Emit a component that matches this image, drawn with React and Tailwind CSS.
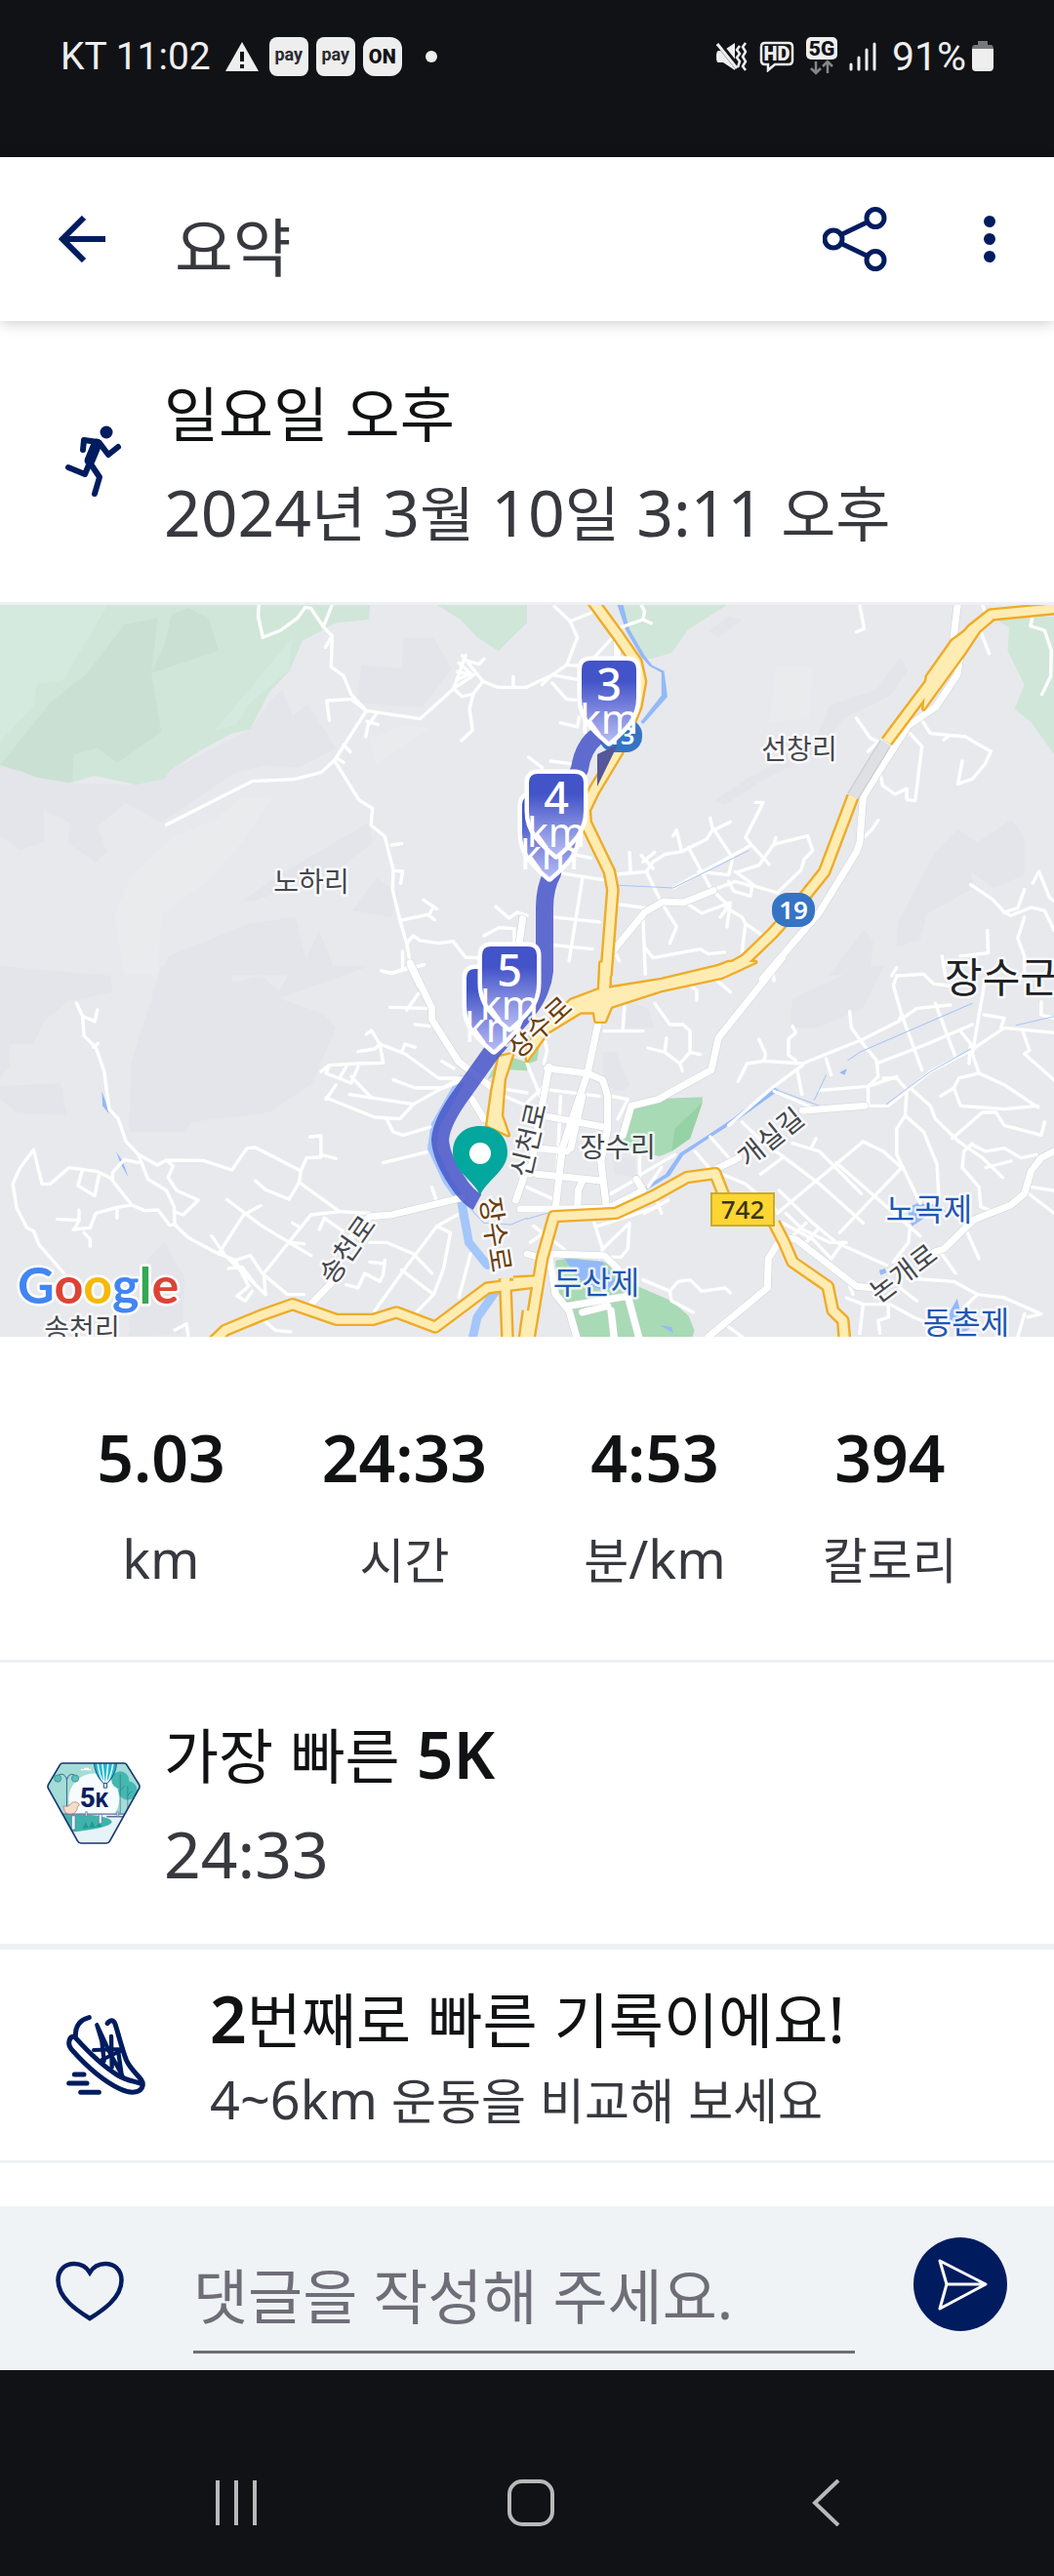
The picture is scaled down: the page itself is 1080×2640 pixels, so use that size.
import { useState } from "react";

const NAVY = "#001c5f";

const STATS = [
  { value: "5.03", label: "km" },
  { value: "24:33", label: "시간" },
  { value: "4:53", label: "분/km" },
  { value: "394", label: "칼로리" },
];

// Map geometry, one tile per quarter. Points are in tile units, x/y is the tile origin on the map.
const TILES = [
  {
    x: 0,
    y: -10,
    shade: [
      "0,522 205,578 405,583 505,540 745,412 810,430 800,520 700,545 480,700 375,640 290,710 318,790 285,822 200,760 210,700 130,660 130,760 60,782 0,740",
      "800,330 840,290 870,370 915,335 1000,470 890,530 740,520 745,412",
      "1075,215 1195,225 1200,132 1290,132 1345,225 1255,345 1060,330",
      "720,940 830,860 1095,700 1110,760 1010,840 760,940",
      "1050,970 1120,870 1185,915 1165,990",
      "480,1168 500,1110 740,1010 880,990 910,1120 950,1030 1000,1168",
    ],
    light: ["390,860 520,740 640,690 720,620 810,620 720,760 620,880 480,980 470,1168 370,1168 340,990", "1100,440 1200,400 1280,410 1120,520"],
    woods: [
      "0,0 1103,0 1098,75 1000,85 900,140 860,235 800,300 745,412 690,425 600,475 505,540 490,565 405,583 280,555 205,578 110,560 95,540 50,540 0,522",
      "1300,30 1370,75 1420,130 1483,172 1568,85 1568,30",
    ],
    woodsLight: ["0,30 320,30 240,170 190,260 110,275 100,340 0,450", "640,415 790,230 870,130 860,230 745,330 700,400"],
    woodsDark: ["370,90 470,70 450,240 480,420 350,515 290,470 220,490 215,575 110,560 60,540 0,522 50,460 150,330 260,240", "510,60 560,40 620,70 650,170 450,240 490,150"],
    minor: [
      "770,30 768,65 782,130 835,108 885,70 908,37 925,40 962,97 988,125 985,220 1022,248 1045,305 1090,355 1250,380 1350,287 1385,185",
      "988,30 962,97",
      "988,125 968,160",
      "1045,320 972,324 980,385",
      "1045,320 1090,355 995,508 955,545 875,566 750,572 495,706",
      "1120,365 1095,400 1088,435",
      "1092,388 1125,397",
      "1022,460 1042,482",
      "1000,500 1022,514",
      "995,508 1068,630 1108,655 1104,707 1145,742 1170,845 1168,905 1190,1000 1210,1070 1222,1140",
      "1165,768 1195,764",
      "1175,847 1198,849 1192,886",
      "1190,1000 1273,982 1293,998",
      "1260,937 1300,965",
      "1290,958 1275,985",
      "1210,1070 1230,1047 1250,1062 1305,1070 1348,1064 1385,1113 1420,1115",
      "1350,287 1375,312 1408,303 1437,265 1480,283 1568,283",
      "1408,303 1397,350 1406,415 1373,447",
      "1375,185 1437,265",
      "1360,235 1410,245 1350,287",
      "1385,200 1425,212 1440,196",
      "1365,208 1400,240 1360,260",
      "1527,250 1527,283",
      "1440,1047 1485,1022 1530,1025 1530,1070",
      "1475,958 1515,993 1540,975 1568,985",
      "1135,1155 1165,1163 1215,1148 1262,1136",
      "1198,1095 1198,1150",
    ],
    mid: ["1222,1140 1250,1200", "1555,995 1545,1070"],
  },
  {
    x: 540,
    y: -10,
    shade: [
      "1110,190 1135,230 1080,310 940,380 870,480 700,570 590,645 560,630 660,560 700,540 860,440 900,340 1040,290",
      "1215,790 1280,720 1340,760 1440,690 1480,740 1480,860 1390,900 1320,850 1330,900 1190,980 1170,1060 1100,1080 1105,1000",
      "540,110 600,65 640,75 570,130",
      "900,1168 1000,1030 1030,1060 1020,1168",
    ],
    light: ["740,220 850,220 840,380 720,390"],
    woods: ["280,30 595,30 480,105 430,178 370,195 345,195 300,110", "1395,75 1568,65 1568,490 1500,390 1450,350 1480,275 1430,170 1435,100"],
    water: ["268,28 286,30 305,105 350,185 372,215 408,233 418,312 346,396 338,390 400,308 400,238 365,218 340,190 295,110"],
    stream: ["270,892 435,900 660,785"],
    minor: [
      "82,35 128,80 150,130 118,215 75,245 45,275",
      "128,80 200,50",
      "170,225 250,135",
      "0,282 75,245 165,262",
      "75,270 118,320 145,322",
      "115,215 165,217",
      "275,100 345,75 350,50 340,30",
      "345,75 370,86",
      "100,393 150,405 155,375",
      "5,498 45,530",
      "70,510 130,518",
      "990,30 1003,103 980,113",
      "1350,112 1375,180",
      "1505,60 1498,95 1540,108 1560,170 1558,250 1532,305",
      "1355,30 1372,75",
      "980,378 1022,440 1045,450 1015,480",
      "1140,425 1175,465 1155,632 1130,628 1130,595 1095,612 1058,585 1050,545",
      "1175,385 1200,425 1305,435 1345,460 1380,480 1362,520 1325,565 1282,580 1295,510",
      "1240,445 1255,432",
      "1045,692 1025,722 1005,742",
      "305,790 308,850",
      "265,858 355,850 375,820 410,797 460,788 535,750 550,725 605,697",
      "545,685 553,722",
      "435,740 445,722 460,788",
      "480,775 550,908",
      "553,715 612,808 600,860 510,850",
      "680,637 703,637 650,745 668,768 720,827",
      "740,745 735,765 690,830 630,850",
      "740,765 835,740 850,785 825,812 815,845 745,915 680,895 620,850",
      "355,850 400,945 445,1020 425,1070",
      "340,800 375,840",
      "345,820 380,790",
      "435,900 668,768",
      "550,908 620,880 670,895 665,925 615,910 600,880",
      "555,910 600,955 575,990",
      "465,940 520,978 605,945 595,1020",
      "590,960 640,990 650,1010 700,1045",
      "650,1010 640,1095",
      "270,950 355,962",
      "345,985 352,1165",
      "352,1085 375,1115 515,1088 540,1103 588,1098",
      "75,990 215,1005",
      "165,870 125,1125",
      "75,1075 195,1088",
      "100,855 245,878",
      "255,1085 275,1125",
      "110,790 190,808",
      "1320,890 1385,935 1420,975 1460,962 1480,905",
      "1505,885 1523,850 1555,930 1568,940",
      "1420,975 1440,985 1500,960 1540,970 1568,1030",
      "1480,990 1460,1055 1480,1110 1480,1170",
      "1370,1030 1372,1100 1290,1110",
      "1235,1110 1245,1170",
      "1100,1145 1085,1170",
    ],
    mid: [
      "555,908 465,945 405,942 350,975 255,1095",
      "1282,20 1268,140",
      "1288,190 1280,245 1215,345 1135,400 1060,520 1000,620 990,760 980,790 870,975 700,1180",
      "268,120 268,200",
    ],
    main: [
      "190,10 275,130 325,205 338,265 325,340 270,480 200,600 172,660 175,700 245,850 255,905 235,1170",
      "1600,38 1380,60 1325,105 1280,160 1070,450",
      "970,618 885,850 800,960 730,1040 650,1120 590,1155 400,1200",
    ],
    junction: ["1265,140 1325,95 1370,60 1385,75 1345,110 1300,180 1180,350 1190,250"],
  },
  {
    x: 0,
    y: 370,
    shade: [
      "0,0 330,30 335,80 200,110 130,170 100,240 30,240 30,310 0,340",
      "0,370 180,360 200,460 50,450 0,410",
      "690,50 780,30 830,75 860,25 1000,0 1100,0 830,100 960,145 1000,190 970,260 930,360 800,450 570,480 550,510 385,510 390,300 480,0 690,0",
      "440,900 490,850 550,960 540,1130 380,1140 390,1080",
    ],
    parks: ["1450,350 1490,270 1568,296 1568,322 1500,318"],
    water: ["303,385 312,410 325,455 305,430", "345,570 365,600 382,650 360,610"],
    river: ["1372,350 1295,490 1285,560 1330,660 1372,720 1395,850 1450,920", "1475,1000 1420,1080 1405,1150"],
    stream: ["1568,775 1520,795 1440,790 1385,730"],
    minor: [
      "228,115 246,155 250,215 285,250 310,325 325,440 352,470 375,540 412,580 468,612 495,597 605,598 690,627 735,560 760,558 895,630 890,665 860,717",
      "246,155 282,170 290,135",
      "278,250 292,238",
      "412,580 440,655 495,690 518,740 520,795 560,835 640,880",
      "495,597 515,615 500,650 525,690 590,720 545,765 518,755",
      "412,605 370,595 335,635 335,660 392,735 430,752 470,750 505,797 520,795",
      "335,655 290,632 205,620 150,670 125,670 100,565 60,620 38,670 50,745 80,805 100,815 115,855 190,945",
      "245,628 232,675 282,707 295,640",
      "392,735 348,742 285,760 268,805 218,810",
      "348,742 348,775",
      "170,778 235,782 235,750",
      "235,782 222,810",
      "250,820 268,840 268,862",
      "895,630 912,590 955,588 955,522 922,525",
      "955,580 1000,592",
      "860,717 790,688 760,660",
      "890,665 1010,755 1100,760",
      "725,765 650,885",
      "675,718 780,800 925,890",
      "725,765 775,737",
      "630,830 670,890 740,960 790,1010",
      "640,880 700,905 745,890 780,945 855,1010 905,1010",
      "700,905 740,985 705,1015 730,1030 750,1000",
      "680,930 720,925 760,980",
      "925,765 785,945 790,1010",
      "925,765 1010,755",
      "870,850 905,855",
      "870,790 895,805",
      "950,810 965,775 1020,815",
      "1140,605 1270,572",
      "1285,680 1298,720",
      "1100,850 1150,850 1230,885 1285,945",
      "1360,765 1300,800 1205,930 1115,1060",
      "1195,935 1290,1010 1225,1080",
      "1300,800 1340,820 1320,930 1290,1010",
      "1400,885 1365,1020",
      "1145,905 1140,950 1130,970 1085,945 1065,990 1030,980",
      "1100,910 1145,915",
      "1160,127 1270,130",
      "1235,180 1280,185",
      "1245,85 1210,135",
      "1135,15 1165,22 1215,5",
      "1065,263 1115,255 1130,240",
      "1090,210 1105,198 1130,240 1140,298 1065,300 980,305 955,325",
      "1130,240 1205,270 1305,345 1380,345",
      "1195,265 1205,240 1235,250",
      "980,305 970,330 1045,360 1065,310",
      "1030,310 1010,345",
      "1045,340 1105,405",
      "970,410 1000,365",
      "1170,350 1235,375 1320,375 1380,350",
      "1040,395 1230,425 1360,350",
      "970,405 1115,465 1190,470 1230,425",
      "1150,470 1170,510 1200,520 1280,495",
      "1315,293 1350,315",
      "520,1120 555,1100 560,1135",
      "780,1085 820,1120 865,1125",
      "1500,400 1568,430",
      "1510,380 1568,390",
    ],
    mid: [
      "1220,-10 1285,130 1285,165 1365,295 1465,375",
      "1405,410 1440,470",
      "1375,712 1165,765 1100,770 1040,840",
      "990,970 925,1040",
      "1535,720 1568,620",
    ],
    main: ["630,1160 670,1120 775,1075 870,1040 1000,1087 1110,1087 1180,1065 1295,1110 1450,990 1600,972", "1503,960 1510,1150", "1572,1060 1560,1150"],
    junction: ["1485,280 1525,270 1500,350 1492,460 1512,520 1450,490 1465,380"],
  },
  {
    x: 540,
    y: 370,
    shade: ["225,265 265,265 305,365 285,385 225,370", "300,110 360,130 380,190 290,190", "255,590 320,590 325,650 260,640", "790,100 1000,0 1060,0 1000,130 860,190 780,190"],
    parks: [
      "275,540 320,430 400,408 522,403 522,420 485,530 430,570 395,585 290,565",
      "85,905 130,898 230,910 330,985 430,1030 480,1075 498,1120 490,1150 150,1150 115,1050 90,1000",
      "0,215 35,215 38,240 30,290 5,300 0,300",
    ],
    parksDark: ["522,420 485,530 430,570 440,500"],
    water: [
      "112,900 225,908 262,965 240,1000 190,985 150,960",
      "1130,745 1160,730 1230,735 1245,755 1190,770 1145,800",
      "1280,1022 1290,1065 1320,1115 1290,1130 1250,1100 1260,1060",
      "930,328 952,315 945,335",
      "1048,935 1065,930 1070,943 1052,950",
      "395,1105 430,1110 435,1128",
      "735,372 750,382 625,475 540,530 465,582 425,645 345,695 340,688 412,640 455,575 535,522 610,470",
    ],
    stream: ["735,378 870,430", "855,412 890,335", "955,290 990,265 1325,115", "1070,425 1140,370 1200,325 1320,255", "1455,182 1568,155", "0,778 60,760"],
    minor: [
      "290,120 285,200",
      "230,200 345,200",
      "380,115 425,180 465,180 485,200 485,265 515,272",
      "360,252 410,265 455,300 462,322",
      "410,265 415,222",
      "485,265 455,300",
      "470,50 505,75 505,105",
      "560,40 605,80",
      "730,0 735,45",
      "628,355 655,300 705,292 820,300 1000,225 1105,170 1160,130 1260,120",
      "690,225 710,270 705,292",
      "790,185 800,205 778,225 778,275 800,290",
      "600,490 735,370 820,305",
      "735,385 860,440",
      "805,325 818,395",
      "890,285 905,335",
      "870,382 1015,370 1100,340",
      "960,140 965,190 1000,240 1040,290 1045,340 1015,370 1015,430",
      "1040,300 1190,240 1325,180",
      "1105,170 1115,150 1090,60 1100,30 1180,25 1210,55 1255,60",
      "1115,150 1175,320",
      "1020,430 1075,430 1200,325 1320,260 1420,190 1568,205",
      "1215,115 1275,280",
      "1360,60 1325,270 1345,330 1420,365 1520,435",
      "1290,200 1320,240 1315,300",
      "1345,330 1285,345 1270,375 1290,430 1355,435 1420,440 1520,430",
      "1270,375 1230,400",
      "1475,200 1495,260 1480,270 1568,350",
      "1360,150 1420,160 1410,190",
      "1530,110 1530,150 1568,160",
      "1060,345 1100,345 1130,380 1125,460 1100,500 1100,580 1170,730",
      "1125,460 1180,510 1220,610 1225,710",
      "1140,375 1200,430 1215,470 1285,540 1355,590 1415,650",
      "1265,530 1355,450 1395,450 1420,490 1530,520 1540,480",
      "1325,545 1300,570 1295,620 1345,680 1350,740 1375,750",
      "1325,550 1365,570 1420,560 1470,590 1515,580",
      "1365,620 1440,600",
      "1500,680 1568,690",
      "1480,690 1568,760",
      "920,605 1170,830",
      "1000,540 745,760",
      "1000,540 1060,570 1115,620 930,820",
      "790,545 870,570 995,700",
      "640,480 690,530 870,670 1000,790",
      "760,590 695,640",
      "580,640 650,670 740,750",
      "500,570 550,630",
      "545,525 610,600",
      "845,560 860,530",
      "750,690 850,790 920,850 1070,920",
      "770,760 820,810 900,850 950,850",
      "760,790 850,840 905,900 940,850",
      "790,830 830,790",
      "830,850 865,810",
      "1140,800 1135,850 1090,910",
      "1230,880 1275,945",
      "1310,820 1345,900",
      "1130,960 1270,970 1340,1010 1420,1020 1530,1070 1490,1080",
      "950,1020 1000,1040 1080,1040 1150,1080 1250,1120",
      "970,1010 960,985",
      "1000,1040 990,1130",
      "1075,1045 1075,1080 1045,1090 1050,1130",
      "1110,990 1160,1030",
      "1340,1010 1300,1050 1310,1080",
      "1480,1070 1460,1140",
      "345,965 425,1000 430,1030 495,1065",
      "425,1000 450,970 485,965 520,1000 590,990 605,1005",
      "600,1110 640,1140",
      "60,380 215,400",
      "100,400 85,740",
      "0,300 40,400",
      "0,680 85,720",
      "0,420 50,370",
      "250,400 300,410 270,470",
      "335,580 335,650 250,700",
      "340,640 440,580",
      "360,680 400,620",
      "200,790 225,870 215,900",
      "210,800 390,740",
      "225,870 305,790 300,870 280,895 220,895",
      "380,700 400,760",
      "350,760 420,720",
      "20,800 110,870",
      "10,850 90,790",
      "50,215 60,260 50,300",
    ],
    mid: [
      "-20,747 95,747 240,745 345,690 325,655",
      "215,160 180,330 105,560 85,745",
      "60,315 180,330 225,350 240,400 240,500 220,600 235,730",
      "65,310 50,400 30,500 10,640",
      "760,-25 570,220 548,320 390,410 310,430 285,520",
      "45,460 230,495",
      "30,560 120,570",
      "30,640 220,660",
      "165,400 130,560",
      "150,745 152,690 165,660",
      "560,625 630,590",
      "820,445 1005,430",
      "1568,570 1530,590 1500,630 1480,700 1440,735 1330,780 1240,870 1210,880",
      "1030,990 980,985 800,840 760,835",
      "745,855 718,900 715,990 540,1140",
      "65,885 230,890 270,930",
      "65,885 85,1010 125,1060 150,1150",
      "125,1045 300,1015 335,1150",
      "250,1060 260,1150",
      "165,1065 240,1045",
      "0,885 65,905",
    ],
    main: [
      "5,1150 45,900 80,770 265,760 380,705 475,650 560,638 595,730",
      "735,790 765,850 790,910 895,985 910,1060 940,1090 945,1150",
      "-40,972 35,968",
      "232,-10 232,60",
    ],
    junction: ["0,240 130,105 215,72 219,-10 247,-10 244,68 400,42 570,0 600,-12 680,-12 580,35 400,75 250,125 232,170 205,170 200,142 160,142 60,205 0,290"],
  },
];

const AREA_LAYERS = [
  { key: "shade", fill: "#e4e5ea" },
  { key: "light", fill: "#eaebed" },
  { key: "woods", fill: "#d0e6d9" },
  { key: "woodsLight", fill: "#d5eadf" },
  { key: "woodsDark", fill: "#cae0d3" },
  { key: "parks", fill: "#a8dab5" },
  { key: "parksDark", fill: "#95d2a6" },
  { key: "water", fill: "#93b9f8" },
];

const LINE_LAYERS = [
  { key: "river", stroke: "#a3c6fb", width: 26 },
  { key: "minor", stroke: "#ffffff", width: 10 },
  { key: "stream", stroke: "#a9c6f5", width: 3 },
  { key: "mid", stroke: "#cfd1d6", width: 24 },
  { key: "mid", stroke: "#ffffff", width: 21 },
  { key: "main", stroke: "#eeac28", width: 40 },
  { key: "junction", stroke: "#eeac28", width: 14 },
  { key: "main", stroke: "#ffecb3", width: 26 },
];

const ROUTE = "M619 130Q598 140 594 168L572 215L566 275Q558 290 558 310V375Q556 395 542 414L504 458L474 500Q452 530 451 548Q452 566 468 590Q478 606 489 612";

const PLACES = [
  { text: "노하리", x: 319, y: 294 },
  { text: "선창리", x: 819, y: 158 },
  { text: "장수리", x: 633, y: 566 },
  { text: "송천리", x: 84, y: 752 },
  { text: "송천로", x: 355, y: 660, turn: -55 },
  { text: "신천로", x: 541, y: 548, turn: -77 },
  { text: "개실길", x: 789, y: 545, turn: -39 },
  { text: "논개로", x: 925, y: 684, turn: -37 },
  { text: "장수로", x: 552, y: 432, turn: -42, color: "#6b3c0c" },
  { text: "장수로", x: 509, y: 645, turn: 81, color: "#6b3c0c" },
  { text: "노곡제", x: 952, y: 631, color: "#1e57b4", size: 32 },
  { text: "두산제", x: 611, y: 706, color: "#1e57b4", size: 32 },
  { text: "동촌제", x: 990, y: 747, color: "#1e57b4", size: 32 },
  { text: "장수군", x: 1026, y: 397, color: "#202124", size: 42 },
];

const MARKERS = [
  { x: 624, y: 57, km: "3" },
  { x: 563, y: 196 },
  { x: 570, y: 173, km: "4" },
  { x: 506, y: 373 },
  { x: 522, y: 350, km: "5" },
];

// Hangul is drawn a step smaller than the Latin text and digits beside it
function Mixed({ text, hangul }) {
  return text.split(/([가-힣]+)/).map((part, index) =>
    /[가-힣]/.test(part) ? (
      <span key={index} className={`${hangul} leading-none`}>
        {part}
      </span>
    ) : (
      part
    )
  );
}

function StatusBar() {
  return (
    <div className="flex h-[161px] items-start justify-between bg-[#111216] pt-9 pr-[62px] pl-[62px] font-[Roboto,sans-serif] text-[#eeeeee]">
      <div className="flex h-11 items-center gap-2">
        <span className="mr-1.5 text-[39px] leading-none">KT 11:02</span>
        <svg width="36" height="32" viewBox="0 0 36 32" className="mr-0.5" aria-hidden="true">
          <path d="M18 1L35 31H1Z" fill="#eee" />
          <path d="M18 11V21M18 24V28" stroke="#111216" strokeWidth="4" />
        </svg>
        <span className="flex size-10 justify-center rounded-lg bg-[#eeeeee] pt-1 text-[18px] leading-7 font-bold text-[#2a2a2e]">pay</span>
        <span className="flex size-10 justify-center rounded-lg bg-[#eeeeee] pt-1 text-[18px] leading-7 font-bold text-[#2a2a2e]">pay</span>
        <span className="flex size-10 items-center justify-center rounded-xl bg-[#eeeeee] text-[20px] leading-none font-black text-[#111216]">ON</span>
        <span className="ml-4 size-3 rounded-full bg-[#eeeeee]" />
      </div>

      <div className="flex h-11 items-center gap-3">
        <svg width="32" height="32" viewBox="0 0 32 32" fill="none" aria-hidden="true">
          <path d="M2 10H7L19 2V30L7 22H2Q0 22 0 16Q0 10 2 10Z" fill="#eee" />
          <path d="M1 1L22 27" stroke="#111216" strokeWidth="6" />
          <path d="M1 3L21 28" stroke="#eee" strokeWidth="3" />
          <path d="M24 5L21 9L24 13L21 17L24 21L22 27M30 2L27 6L30 11L27 16L30 21L27 26L30 30" stroke="#eee" strokeWidth="2.500" />
        </svg>
        <svg width="36" height="32" viewBox="0 0 36 32" fill="none" aria-hidden="true">
          <path d="M6 2H30Q34 2 34 6V20Q34 24 30 24H16L9 30V24H6Q2 24 2 20V6Q2 2 6 2Z" stroke="#eee" strokeWidth="2.500" />
          <text x="18" y="20" textAnchor="middle" fill="#eee" fontSize="20" fontWeight="900">HD</text>
        </svg>
        <svg width="32" height="40" viewBox="0 0 32 40" fill="none" aria-hidden="true">
          <rect width="32" height="23" rx="5" fill="#eee" />
          <text x="16" y="19" textAnchor="middle" fill="#111216" fontSize="21" fontWeight="900">5G</text>
          <path d="M10 25V37M5 32L10 37L15 32M22 37V25M17 30L22 25L27 30" stroke="#85868a" strokeWidth="2.500" />
        </svg>
        <svg width="28" height="30" viewBox="0 0 28 30" fill="none" className="mr-1" aria-hidden="true">
          <path d="M2 23V28M10 16V28M18 8V28M26 2V28" stroke="#eee" strokeWidth="3" strokeLinecap="round" />
        </svg>
        <span className="flex items-center gap-1.5">
          <span className="text-[41px] leading-none">91%</span>
          <svg width="22" height="32" viewBox="0 0 22 32" aria-hidden="true">
            <path d="M6 0H16V4H19Q22 4 22 8V12H0V8Q0 4 3 4H6Z" fill="#77787b" />
            <path d="M0 8H22V27Q22 31 18 31H4Q0 31 0 27Z" fill="#eee" />
          </svg>
        </span>
      </div>
    </div>
  );
}

function Header() {
  return (
    <header className="relative z-10 flex h-42 items-center bg-white pr-[60px] pl-[60px] shadow-[0_2px_14px_rgba(0,0,0,0.2)]">
      <button type="button" aria-label="뒤로" className="mr-[71px]">
        <svg width="48" height="48" viewBox="0 0 48 48" fill="none" stroke={NAVY} strokeWidth="6">
          <path d="M48 24H5M26 2L4 24L26 46" />
        </svg>
      </button>
      <h1 className="flex-1 pt-4 text-[65px] leading-[90px] text-[#38393f]">요약</h1>
      <button type="button" aria-label="공유" className="mr-[99px]">
        <svg width="66" height="66" viewBox="0 0 66 66" fill="none" stroke={NAVY} strokeWidth="5">
          <circle cx="11" cy="33" r="9" />
          <circle cx="54" cy="11.500" r="9" />
          <circle cx="54" cy="54.500" r="9" />
          <path d="M19 28.500L46 15.500M19 37.500L46 50.500" />
        </svg>
      </button>
      <button type="button" aria-label="더보기">
        <svg width="12" height="48" viewBox="0 0 12 48" fill={NAVY}>
          <circle cx="6" cy="6" r="6" />
          <circle cx="6" cy="24" r="6" />
          <circle cx="6" cy="42" r="6" />
        </svg>
      </button>
    </header>
  );
}

function RunnerIcon() {
  return (
    <svg width="60" height="74" viewBox="0 0 60 74" fill="none" stroke={NAVY} strokeLinecap="round" strokeLinejoin="round" aria-hidden="true">
      <circle cx="43" cy="7" r="6.500" fill={NAVY} stroke="none" />
      <path d="M19 25L20 15L34 17" strokeWidth="6" />
      <path d="M33 19L26 36" strokeWidth="11" />
      <path d="M36 18L45 30L55 22M26 38L21 50L4 43M26 38L36 53L31 70" strokeWidth="6" />
    </svg>
  );
}

function BadgeIcon() {
  const hexagon = "M84 50H274Q279 50 282 55L320 116Q323 122 320 128L230 290Q226 297 219 297H141Q134 297 130 290L40 128Q37 122 40 116L76 55Q79 50 84 50Z";
  return (
    <svg width="96" height="84" viewBox="36 47 288 253" fill="none" aria-hidden="true">
      <clipPath id="badge-shape">
        <path d={hexagon} />
      </clipPath>
      <g clipPath="url(#badge-shape)">
        <rect x="36" y="47" width="288" height="253" fill="#a5dcd6" />
        <circle cx="181" cy="160" r="78" fill="#f6fbfd" />
        <path d="M36 208H324V300H36Z" fill="#e6f4f7" />
        <path d="M80 208H160Q235 215 236 232Q230 250 100 264Z" fill="#3fb3ab" />
        <path d="M145 252L155 232L165 250L175 228L185 248L198 232L205 246Z" fill="#1f9c93" />
        <circle cx="262" cy="102" r="27" fill="#44b8b0" />
        <circle cx="285" cy="134" r="29" fill="#44b8b0" />
        <path d="M262 85V205M285 120V205M262 135L275 120M285 150L298 136" stroke="#2a6f8e" strokeWidth="2" />
        <path d="M181 45H251Q250 85 222 112H210Q182 85 181 45Z" fill="#25b6c9" />
        <path d="M192 45Q196 85 211 112M206 45L213 112M225 45L218 112M240 45Q236 85 221 112" stroke="#dff6fa" strokeWidth="5" />
        <path d="M181 45Q182 85 210 112H222Q250 85 251 45M211 112V126H221V112" stroke="#1c4c86" strokeWidth="3" />
        <path d="M97 205V95M97 100Q92 84 80 84Q68 84 68 95M97 100Q102 84 112 84Q124 84 124 95" stroke="#3c5f93" strokeWidth="3" />
        <circle cx="69" cy="97" r="11" fill="#5bc0b6" stroke="#2a7f9e" strokeWidth="2" />
        <circle cx="123" cy="97" r="11" fill="#5bc0b6" stroke="#2a7f9e" strokeWidth="2" />
        <path d="M80 207H280M220 215H270" stroke="#5f6e9e" strokeWidth="4" />
        <path d="M112 212H123V255H112ZM196 208H205V236H196ZM155 200H160V214H155ZM252 200H257V214H252Z" fill="#eef6fa" stroke="#5f6e9e" strokeWidth="2" />
        <path d="M86 182Q98 186 106 180Q112 168 126 170Q134 172 136 180L130 184Q130 205 108 207Q92 206 90 196Z" fill="#f8dcc8" stroke="#a5766c" strokeWidth="2" />
        <path d="M140 70H172M150 66H165" stroke="#fff" strokeWidth="4" />
        <text x="181" y="185" textAnchor="middle" fill="#0c1f5e" fontFamily="Roboto, sans-serif" fontWeight="800" fontSize="84">
          5<tspan fontSize="62">K</tspan>
        </text>
      </g>
      <path d={hexagon} stroke="#17366f" strokeWidth="5" />
    </svg>
  );
}

function ShoeIcon() {
  return (
    <svg width="86" height="86" viewBox="90 818 258 258" fill="none" stroke={NAVY} strokeWidth="15" strokeLinecap="round" strokeLinejoin="round" aria-hidden="true">
      <path d="M166 832Q124 842 124 888" />
      <path d="M122 890C104 888 98 914 112 930C158 982 215 1030 262 1052C292 1066 326 1066 331 1040C335 1020 296 1000 280 962C266 925 258 890 246 852Q238 832 222 850" />
      <path d="M122 892C165 940 205 980 255 1010C280 1025 305 1028 328 1036" />
      <path d="M180 932L245 930L270 930M205 962L268 932" strokeWidth="12" />
      <path d="M190 855L232 945L268 1010M190 855L205 905L212 965M234 890L236 985M256 940L266 1008" strokeWidth="13" />
      <path d="M121 1007H150M104 1034H159M140 1062H196" />
    </svg>
  );
}

function KmMarker({ x, y, km }) {
  return (
    <g transform={`translate(${x} ${y})`} fill="#fff" textAnchor="middle">
      <path
        d="M-19 0H19Q28 0 28 9V38Q28 52 20 63Q12 73 0 83Q-12 73-20 63Q-28 52-28 38V9Q-28 0-19 0Z"
        fill="url(#marker-fill)"
        stroke="#fff"
        strokeWidth="9"
        strokeLinejoin="round"
        paintOrder="stroke"
      />
      {km && (
        <text y="41" fontSize="45" fontWeight="500">
          {km}
        </text>
      )}
      <text y="75" fontSize="41">
        km
      </text>
    </g>
  );
}

function RouteMap() {
  return (
    <svg
      viewBox="0 0 1080 750"
      className="block h-auto w-full border-t-3 border-[#eef1f4] bg-[#e8e9ed]"
      fontFamily='"Noto Sans", "Noto Sans CJK KR", sans-serif'
      role="img"
      aria-label="운동 경로"
    >
      <defs>
        <linearGradient id="marker-fill" x1="0" y1="0" x2="0" y2="1">
          <stop offset="0.250" stopColor="#4353c8" />
          <stop offset="0.700" stopColor="#8a93e2" />
          <stop offset="1" stopColor="#b4baf5" />
        </linearGradient>
      </defs>

      {AREA_LAYERS.map((layer) =>
        TILES.map((tile, index) => (
          <g key={`${layer.key}-${index}`} transform={`translate(${tile.x} ${tile.y}) scale(0.3444 0.3333)`} fill={layer.fill}>
            {tile[layer.key]?.map((points) => (
              <polygon key={points} points={points} />
            ))}
          </g>
        ))
      )}

      {LINE_LAYERS.map((layer, order) =>
        TILES.map((tile, index) => (
          <g
            key={`${order}-${index}`}
            transform={`translate(${tile.x} ${tile.y}) scale(0.3444 0.3333)`}
            fill="none"
            stroke={layer.stroke}
            strokeWidth={layer.width}
            strokeLinejoin="round"
            strokeLinecap={layer.key === "main" ? "butt" : "round"}
          >
            {tile[layer.key]?.map((points) =>
              layer.key === "junction" ? <polygon key={points} points={points} /> : <polyline key={points} points={points} />
            )}
          </g>
        ))
      )}
      {TILES.map((tile, index) => (
        <g key={index} transform={`translate(${tile.x} ${tile.y}) scale(0.3444 0.3333)`} fill="#ffecb3">
          {tile.junction?.map((points) => (
            <polygon key={points} points={points} />
          ))}
        </g>
      ))}

      {/* tunnel section of road 19 */}
      <path d="M907 142L874 196" stroke="#c9cacf" strokeWidth="13" />
      <path d="M907 142L874 196" stroke="#dfe0e4" strokeWidth="11" />

      <rect x="614" y="117" width="44" height="34" rx="16" fill="#3574c4" />
      <text x="636" y="143" textAnchor="middle" fill="#fff" fontSize="25" fontWeight="600">
        13
      </text>
      <rect x="791" y="295" width="44" height="35" rx="16" fill="#3574c4" />
      <text x="813" y="322" textAnchor="middle" fill="#fff" fontSize="26" fontWeight="600">
        19
      </text>
      <rect x="729" y="603" width="64" height="33" fill="#fdd633" stroke="#c9ab30" strokeWidth="2" />
      <text x="761" y="629" textAnchor="middle" fill="#3b3413" fontSize="26" fontWeight="500">
        742
      </text>

      <path d="M612 153L633 143L612 186Z" fill="#55579b" />
      <path d={ROUTE} fill="none" stroke="#4655c8" strokeOpacity="0.850" strokeWidth="18" strokeLinejoin="round" />

      {PLACES.map((place, index) => (
        <text
          key={index}
          x={place.x}
          y={place.y}
          transform={place.turn ? `rotate(${place.turn} ${place.x} ${place.y})` : undefined}
          dominantBaseline={place.turn ? "central" : undefined}
          textAnchor="middle"
          fontSize={place.size ?? 28}
          fontWeight="400"
          fill={place.color ?? "#45474c"}
          stroke="#fff"
          strokeOpacity="0.800"
          strokeWidth="5"
          strokeLinejoin="round"
          paintOrder="stroke"
        >
          {place.text}
        </text>
      ))}

      {MARKERS.map((marker, index) => (
        <KmMarker key={index} {...marker} />
      ))}

      <path d="M492 605C486 590 464 580 464 561C464 544 476 534 492 534C508 534 520 544 520 561C520 580 498 590 492 605Z" fill="#04a79d" />
      <circle cx="492" cy="562" r="11" fill="#fff" />

      <text x="18" y="716" fontFamily="Lato, sans-serif" fontSize="52" fontWeight="700" stroke="#fff" strokeWidth="5" strokeLinejoin="round" paintOrder="stroke">
        <tspan fill="#4285f4">G</tspan>
        <tspan fill="#dd4335">o</tspan>
        <tspan fill="#f6b90b">o</tspan>
        <tspan fill="#4285f4">g</tspan>
        <tspan fill="#34a853">l</tspan>
        <tspan fill="#dd4335">e</tspan>
      </text>
    </svg>
  );
}

function InfoRow({ icon, title, strong, detail }) {
  return (
    <section className="flex items-center py-[42px]">
      <div className="flex w-42 shrink-0 justify-center pl-6">{icon}</div>
      <div className="text-[66px] leading-[102px]">
        <h2 className="text-[#111214]">
          <Mixed text={title} hangul="text-[61px]" />
          {strong && <strong className="font-semibold"> {strong}</strong>}
        </h2>
        <p className="text-[#38393f]">
          <Mixed text={detail} hangul="text-[61px]" />
        </p>
      </div>
    </section>
  );
}

function CommentBar() {
  const [comment, setComment] = useState("");

  return (
    <form className="flex h-42 items-start bg-[#eff3f6] pr-12 pl-[57px]" onSubmit={(event) => event.preventDefault()}>
      <button type="button" aria-label="좋아요" className="mt-14 mr-[71px]">
        <svg width="70" height="62" viewBox="0 0 70 62" fill="none" stroke={NAVY} strokeWidth="4.500">
          <path d="M35 59C22 51 2.500 38 2.500 20C2.500 9 10 3 19 3C27 3 32 7 35 12C38 7 43 3 51 3C60 3 67.500 9 67.500 20C67.500 38 48 51 35 59Z" />
        </svg>
      </button>
      <input
        type="text"
        aria-label="댓글"
        value={comment}
        onChange={(event) => setComment(event.target.value)}
        placeholder="댓글을 작성해 주세요."
        className="mt-12 h-[103px] min-w-0 flex-1 border-b-3 border-[#6e6d78] bg-transparent pb-3 text-[61px] text-[#38393f] outline-none placeholder:text-[#6e6d78]"
      />
      <button type="submit" aria-label="보내기" className="mt-8 ml-[60px] size-24 shrink-0 rounded-full bg-[#001c5f]">
        <svg width="96" height="96" viewBox="0 0 96 96" fill="none" stroke="#fff" strokeWidth="3" strokeLinejoin="round">
          <path d="M27 24L74 48L27 73L34 48ZM34 48H74" />
        </svg>
      </button>
    </form>
  );
}

function NavigationBar() {
  return (
    <nav className="flex flex-1 items-start justify-center gap-[254px] bg-[#111216] pt-28 pb-[51px] pl-2">
      <button type="button" aria-label="최근 앱">
        <svg width="48" height="48" viewBox="0 0 48 48" fill="none" stroke="#b9b9ba" strokeWidth="4">
          <path d="M5 1V47M24 1V47M43 1V47" />
        </svg>
      </button>
      <button type="button" aria-label="홈">
        <svg width="48" height="48" viewBox="0 0 48 48" fill="none" stroke="#b9b9ba" strokeWidth="4">
          <rect x="2" y="2" width="44" height="44" rx="13" />
        </svg>
      </button>
      <button type="button" aria-label="이전">
        <svg width="48" height="48" viewBox="0 0 48 48" fill="none" stroke="#b9b9ba" strokeWidth="4">
          <path d="M37 1L13 24L37 47" />
        </svg>
      </button>
    </nav>
  );
}

export default function App() {
  return (
    <div className='flex min-h-screen flex-col bg-white font-["Noto_Sans","Noto_Sans_CJK_KR",sans-serif]'>
      <StatusBar />
      <Header />

      <main>
        <InfoRow icon={<RunnerIcon />} title="일요일 오후" detail="2024년 3월 10일 3:11 오후" />
        <RouteMap />

        <dl className="flex justify-evenly border-b-3 border-[#eef1f4] pt-[73px] pb-[54px] text-center">
          {STATS.map((stat) => (
            <div key={stat.value} className="flex flex-col-reverse gap-1">
              <dt className="text-[54px] leading-[100px] text-[#38393f]">
                <Mixed text={stat.label} hangul="text-[50px]" />
              </dt>
              <dd className="text-[66px] leading-[100px] font-semibold text-[#111214]">{stat.value}</dd>
            </div>
          ))}
        </dl>

        <InfoRow icon={<BadgeIcon />} title="가장 빠른" strong="5K" detail="24:33" />

        <section className="flex items-center border-t-6 border-b-3 border-[#eef2f5] py-[25px]">
          <div className="flex w-[215px] shrink-0 pl-[66px]">
            <ShoeIcon />
          </div>
          <div>
            <h2 className="text-[66px] leading-[90px] text-[#111214]">
              <strong className="font-semibold">2</strong>
              <Mixed text="번째로 빠른 기록이에요!" hangul="text-[61px]" />
            </h2>
            <p className="text-[54px] leading-[76px] text-[#38393f]">
              <Mixed text="4~6km 운동을 비교해 보세요" hangul="text-[50px]" />
            </p>
          </div>
        </section>
        <div className="h-11" />
      </main>

      <CommentBar />
      <NavigationBar />
    </div>
  );
}
